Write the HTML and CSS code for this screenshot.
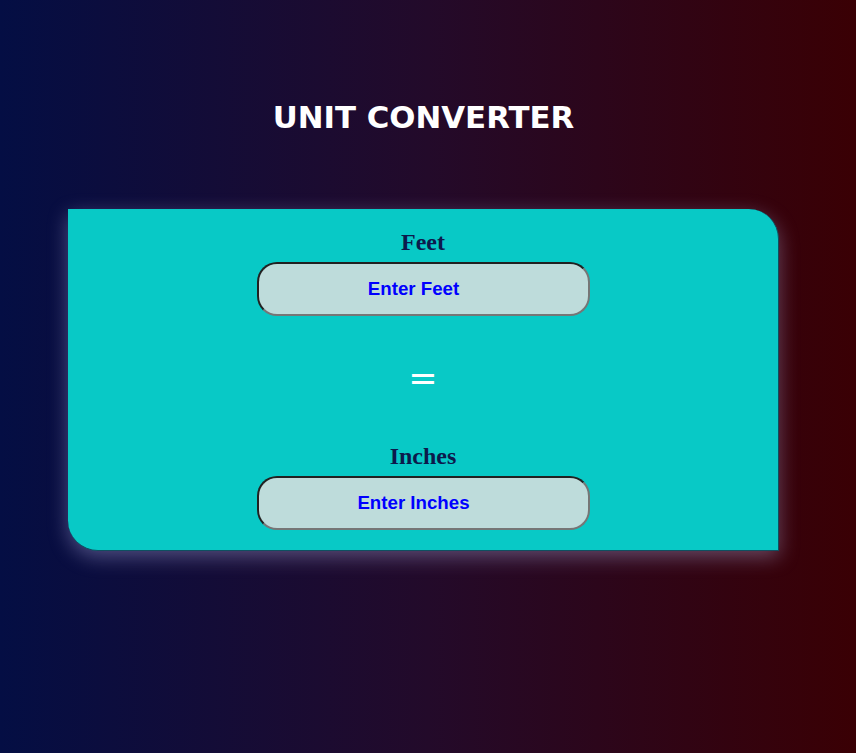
FILE: index.html
```html
<!DOCTYPE html>
<html>
<head>
<meta charset="utf-8">
<title>Unit Converter</title>
<link rel="stylesheet" href="styles.css">
</head>
<body>
<div class="page">
  <h1 class="title">UNIT CONVERTER</h1>
  <div class="card">
    <h2 class="label">Feet</h2>
    <input class="field" type="number" placeholder="Enter Feet">
    <div class="eq">=</div>
    <h2 class="label">Inches</h2>
    <input class="field" type="number" placeholder="Enter Inches">
  </div>
</div>
</body>
</html>
```
FILE: styles.css
```css
html, body {
  margin: 0;
  padding: 0;
}
body {
  min-height: 100vh;
  background: linear-gradient(to right, #040e44, #230a2a 50%, #3a0004);
}
.page {
  width: 711px;
  margin-left: 68px;
  padding-top: 99px;
}
.title {
  margin: 0 0 74px;
  text-align: center;
  color: #ffffff;
  font-family: "DejaVu Sans", Verdana, sans-serif;
  font-weight: bold;
  font-size: 30.8px;
  line-height: 36px;
}
.card {
  display: flex;
  flex-direction: column;
  align-items: center;
  background: #08c9c6;
  border-radius: 0 30px 0 30px;
  border-right: 1px solid #0e5060;
  border-bottom: 1px solid #0e5060;
  padding: 19px 0 20px;
  box-shadow: 0 6px 20px rgba(200, 200, 255, 0.35);
}
.label {
  margin: 0 0 6px;
  font-family: "Liberation Serif", "Times New Roman", serif;
  font-weight: bold;
  font-size: 24px;
  line-height: 28px;
  color: #0c1a4c;
}
.field {
  box-sizing: border-box;
  width: 333px;
  height: 54px;
  border: 2px inset rgb(118, 118, 118);
  border-radius: 20px;
  background: #bedcdb;
  text-align: center;
  font-family: "Liberation Sans", Arial, sans-serif;
  font-weight: bold;
  font-size: 18.7px;
  color: #0000ff;
  padding: 1px 6px 1px 2px;
  outline: none;
}
.field::placeholder {
  color: #0000ff;
  opacity: 1;
}
.eq {
  margin: 40px 0 42px;
  height: 44px;
  line-height: 44px;
  font-family: "DejaVu Sans", Verdana, sans-serif;
  font-size: 35px;
  color: #ffffff;
}
```
